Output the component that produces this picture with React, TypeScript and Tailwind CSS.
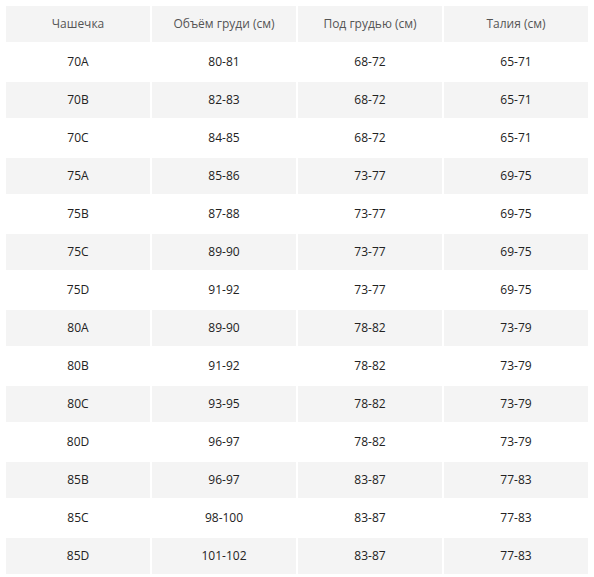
const rows: [string, string, string, string][] = [
  ['70A', '80-81', '68-72', '65-71'],
  ['70B', '82-83', '68-72', '65-71'],
  ['70C', '84-85', '68-72', '65-71'],
  ['75A', '85-86', '73-77', '69-75'],
  ['75B', '87-88', '73-77', '69-75'],
  ['75C', '89-90', '73-77', '69-75'],
  ['75D', '91-92', '73-77', '69-75'],
  ['80A', '89-90', '78-82', '73-79'],
  ['80B', '91-92', '78-82', '73-79'],
  ['80C', '93-95', '78-82', '73-79'],
  ['80D', '96-97', '78-82', '73-79'],
  ['85B', '96-97', '83-87', '77-83'],
  ['85C', '98-100', '83-87', '77-83'],
  ['85D', '101-102', '83-87', '77-83'],
];

const headers = ['Чашечка', 'Объём груди (см)', 'Под грудью (см)', 'Талия (см)'];

export default function App() {
  return (
    <div className="bg-white w-[594px] min-h-[577px] pt-[4px] px-[4px] font-['Open_Sans',sans-serif] text-[12px]">
      <table className="w-[586px] border-separate border-spacing-[2px] table-fixed">
        <thead>
          <tr>
            {headers.map((h) => (
              <th key={h} className="h-[36px] p-0 bg-[#f4f4f4] font-normal text-[#555555] text-center align-middle">
                {h}
              </th>
            ))}
          </tr>
        </thead>
        <tbody>
          {rows.map((r, i) => (
            <tr key={r[0]}>
              {r.map((c, j) => (
                <td
                  key={j}
                  className={`h-[36px] p-0 text-center align-middle text-[#222222] ${i % 2 === 1 ? 'bg-[#f4f4f4]' : 'bg-white'}`}
                >
                  {c}
                </td>
              ))}
            </tr>
          ))}
        </tbody>
      </table>
    </div>
  );
}
